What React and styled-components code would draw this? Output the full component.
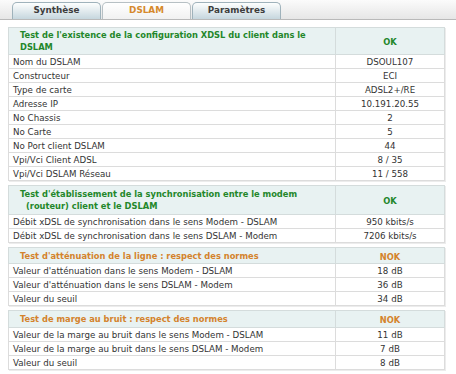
import React from "react";
import styled, { createGlobalStyle } from "styled-components";

const Global = createGlobalStyle`
  html, body { margin: 0; padding: 0; background: #fff; }
  body { font-family: "DejaVu Sans", Verdana, sans-serif; }
`;

const Page = styled.div`
  width: 456px;
  height: 374px;
  overflow: hidden;
  background: #fff;
`;

const TabBar = styled.div`
  display: flex;
  align-items: flex-end;
  height: 20px;
  padding-left: 12px;
  box-sizing: border-box;
  background: linear-gradient(#fbfbfb, #e6e6e6);
  border-bottom: 1px solid #b9b9b9;
`;

const Tab = styled.div`
  width: 89px;
  height: 17px;
  box-sizing: border-box;
  margin-right: 1px;
  border: 1px solid ${(p) => (p.$active ? "#b7c0c4" : "#9fb2bb")};
  border-bottom: none;
  border-radius: 5px 5px 0 0;
  background: ${(p) =>
    p.$active
      ? "linear-gradient(#ffffff, #f1f1f1)"
      : "linear-gradient(#fdfefe, #c6d6de)"};
  color: ${(p) => (p.$active ? "#d6892c" : "#3d3d3d")};
  font-size: 8.8px;
  font-weight: bold;
  line-height: 15px;
  text-align: center;
`;

const Content = styled.div`
  display: flex;
  flex-direction: column;
  gap: 4px;
  padding: 7px 0 0 8px;
`;

const Table = styled.table`
  width: 436px;
  border-collapse: collapse;
  border: 1px solid #cdcdcd;
  box-shadow: 1px 1px 0 #ececec;
  table-layout: fixed;
`;

const HeadCell = styled.th`
  background: #e8f2f2;
  border: 1px solid #d4dcdc;
  color: ${(p) => (p.$warn ? "#d4832c" : "#23872a")};
  font-size: 8.3px;
  font-weight: bold;
  line-height: 12px;
  padding: 1px 4px 1px 11px;
  height: ${(p) => p.$h}px;
  box-sizing: border-box;
  text-align: left;
  vertical-align: middle;
  white-space: nowrap;
`;

const HeadValue = styled(HeadCell)`
  padding: 2px 0 0 0;
  text-align: center;
`;

const Cell = styled.td`
  border: 1px solid #dcdcdc;
  height: 14px;
  box-sizing: border-box;
  padding: 0 4px;
  font-size: 8.7px;
  line-height: 12px;
  color: #333;
  white-space: nowrap;
  overflow: hidden;
  text-align: ${(p) => (p.$center ? "center" : "left")};
`;

const Indent = styled.span`
  padding-left: 6px;
`;

const sections = [
  {
    title: (
      <>
        Test de l'existence de la configuration XDSL du client dans le
        <br />
        DSLAM
      </>
    ),
    h: 27,
    status: "OK",
    rows: [
      ["Nom du DSLAM", "DSOUL107"],
      ["Constructeur", "ECI"],
      ["Type de carte", "ADSL2+/RE"],
      ["Adresse IP", "10.191.20.55"],
      ["No Chassis", "2"],
      ["No Carte", "5"],
      ["No Port client DSLAM", "44"],
      ["Vpi/Vci Client ADSL", "8 / 35"],
      ["Vpi/Vci DSLAM Réseau", "11 / 558"],
    ],
  },
  {
    title: (
      <>
        Test d'établissement de la synchronisation entre le modem
        <br />
        <Indent>(routeur) client et le DSLAM</Indent>
      </>
    ),
    h: 29,
    status: "OK",
    rows: [
      ["Débit xDSL de synchronisation dans le sens Modem - DSLAM", "950 kbits/s"],
      ["Débit xDSL de synchronisation dans le sens DSLAM - Modem", "7206 kbits/s"],
    ],
  },
  {
    title: <>Test d'atténuation de la ligne : respect des normes</>,
    h: 16,
    status: "NOK",
    warn: true,
    rows: [
      ["Valeur d'atténuation dans le sens Modem - DSLAM", "18 dB"],
      ["Valeur d'atténuation dans le sens DSLAM - Modem", "36 dB"],
      ["Valeur du seuil", "34 dB"],
    ],
  },
  {
    title: <>Test de marge au bruit : respect des normes</>,
    h: 17,
    status: "NOK",
    warn: true,
    rows: [
      ["Valeur de la marge au bruit dans le sens Modem - DSLAM", "11 dB"],
      ["Valeur de la marge au bruit dans le sens DSLAM - Modem", "7 dB"],
      ["Valeur du seuil", "8 dB"],
    ],
  },
];

export default function App() {
  return (
    <Page>
      <Global />
      <TabBar>
        <Tab>Synthèse</Tab>
        <Tab $active>DSLAM</Tab>
        <Tab>Paramètres</Tab>
      </TabBar>
      <Content>
        {sections.map((s, i) => (
          <Table key={i}>
            <colgroup>
              <col style={{ width: 327 }} />
              <col style={{ width: 109 }} />
            </colgroup>
            <thead>
              <tr>
                <HeadCell $h={s.h} $warn={s.warn}>
                  {s.title}
                </HeadCell>
                <HeadValue $h={s.h} $warn={s.warn}>
                  {s.status}
                </HeadValue>
              </tr>
            </thead>
            <tbody>
              {s.rows.map(([k, v]) => (
                <tr key={k}>
                  <Cell>{k}</Cell>
                  <Cell $center>{v}</Cell>
                </tr>
              ))}
            </tbody>
          </Table>
        ))}
      </Content>
    </Page>
  );
}
